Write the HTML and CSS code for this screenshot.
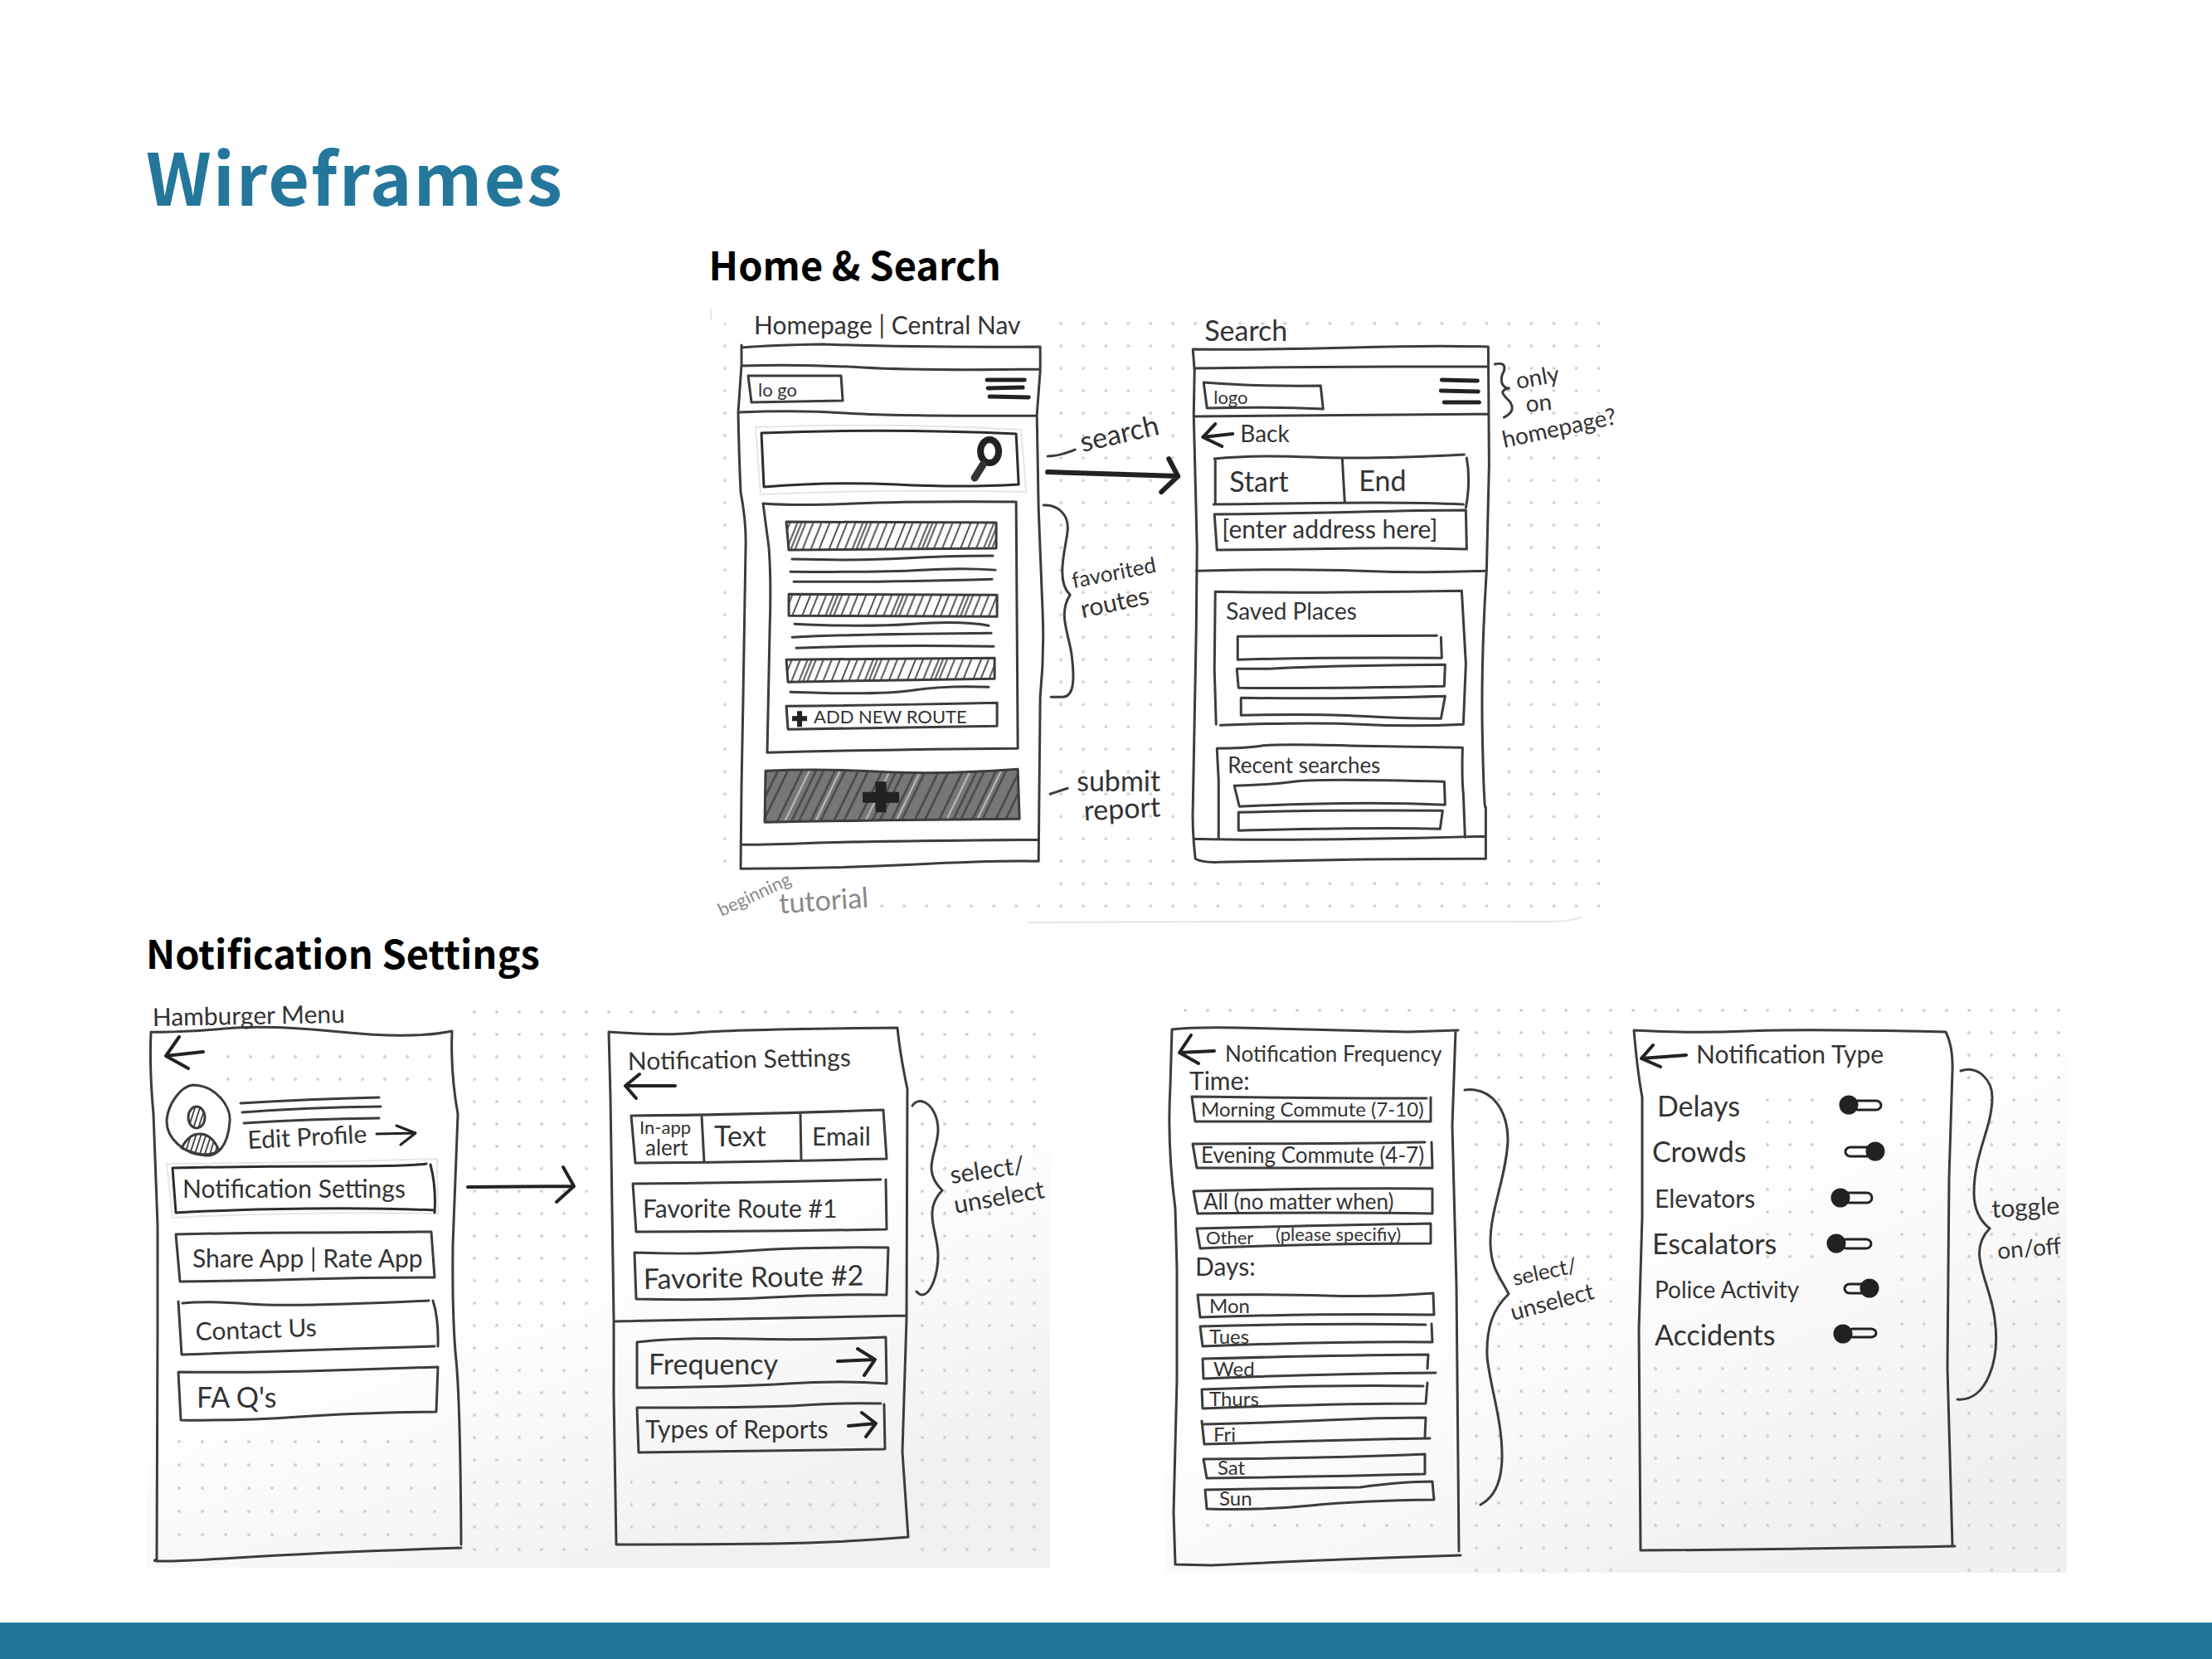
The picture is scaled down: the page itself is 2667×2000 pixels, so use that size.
FILE: index.html
```html
<!DOCTYPE html>
<html lang="en">
<head>
<meta charset="utf-8">
<meta name="viewport" content="width=device-width, initial-scale=1">
<title>Wireframes</title>
<link rel="stylesheet" href="styles.css">
</head>
<body>
<main class="slide">
  <h1 class="slide-title">Wireframes</h1>

  <section class="flow flow-home">
    <h2 class="flow-title">Home &amp; Search</h2>
    <svg class="sketch" viewBox="855 364 1095 750" role="img" aria-label="Sketch of the homepage and the search screen">
      <defs>
        <pattern id="dots-a" width="27" height="27" x="1265" y="403" patternUnits="userSpaceOnUse"><circle class="dot" cx="14" cy="14" r="2"/></pattern>
        <pattern id="hatch" width="79" height="60" patternUnits="userSpaceOnUse" patternTransform="skewX(-22)">
          <path class="hatch-line" d="M3 0V60M12 0V60M22 0V60M31 0V60M36 0V60M41 0V60M50 0V60M60 0V60M70 0V60"/>
        </pattern>
        <pattern id="scribble" width="97" height="80" patternUnits="userSpaceOnUse" patternTransform="skewX(-26)">
          <rect width="97" height="80" fill="#777"/>
          <path d="M5 0V80M17 0V80M33 0V80M45 0V80M62 0V80M79 0V80M88 0V80" stroke="#4a4a4a" stroke-width="3"/>
          <path d="M11 0V80M71 0V80" stroke="#c4c4c4" stroke-width="2"/>
        </pattern>
      </defs>
      <path class="paper-dots" fill="url(#dots-a)" d="M1265 383H1430V1100H1265ZM1430 1049H1935V1100H1430ZM1430 383H1935V410H1430ZM1803 410H1935V1100H1803ZM1060 1070H1265V1100H1060ZM858 390H880V1040H858Z"/>
      <path class="faint" d="M857 373V385M1240 1112Q1500 1110 1860 1111Q1890 1111 1905 1106"/>

      <!-- Homepage -->
      <path class="pen" d="M894 416L894 440L890 497Q891 550 893 593Q900 630 899 660L896 840L894 947L893 1047Q1000 1047 1100 1042T1252 1038L1254 840Q1259 790 1257 740L1252 613L1250 500L1254 447V418Q1100 419 992 415Q930 416 894 419M894 441Q970 439 1040 443T1254 445M891 497Q960 494 1020 498T1250 501M896 1018Q930 1018 980 1016T1252 1012"/>
      <path class="pen" d="M902 453L1014 453L1016 483L906 485Z"/>
      <path class="bars" d="M1190 458H1235M1191 468L1233 467M1193 478L1240 479"/>
      <path class="faint" d="M911 515Q1070 509 1231 518L1237 593Q1080 589 917 596Z"/>
      <path class="pen strong" d="M918 522Q1070 516 1225 523L1228 584Q1160 588 1080 584T921 587Z"/>
      <ellipse class="lens" cx="1193" cy="544" rx="11" ry="14"/>
      <path class="handle" d="M1185 560L1175 576"/>
      <path class="pen" d="M920 607Q960 610 1030 607T1225 605L1227 902Q1080 903 925 907L928 760Q930 700 927 660Z"/>
      <path class="pen hatched" d="M948 629L1201 630V661L951 663Z"/>
      <path class="pen" d="M955 674Q1040 676 1090 673T1197 670M953 689Q1060 690 1110 687T1200 687M957 701Q1060 702 1196 698"/>
      <path class="pen hatched" d="M951 716L1202 717V743L951 742Z"/>
      <path class="pen" d="M958 752Q1040 756 1100 752T1192 754M955 768Q1040 764 1195 763M960 781Q1060 777 1198 779"/>
      <path class="pen hatched" d="M948 795L1199 793V818L950 822Z"/>
      <path class="pen" d="M953 834Q1060 838 1100 832T1192 828"/>
      <path class="pen" d="M948 851Q1060 850 1202 847V875Q1090 877 950 879Z"/>
      <path class="cross" d="M964 857V876M955 866H973"/>
      <path class="pen report" d="M923 929Q990 926 1060 930T1227 927L1229 987Q1080 988 922 991Z"/>
      <path class="cross big" d="M1062 942V979M1040 961H1084"/>
      <path class="pen" d="M1263 550Q1276 550 1296 542M1266 957L1287 950"/>
      <path class="arrow bold" d="M1263 569L1420 574M1409 553L1420 574L1400 593"/>
      <path class="pen" d="M1258 609C1275 608 1289 620 1287 640S1272 700 1290 717C1275 740 1289 765 1292 790S1296 840 1281 840H1267"/>
      <g class="hand">
        <text class="s30" x="909" y="403">Homepage | Central Nav</text>
        <text class="s22" x="914" y="478">lo go</text>
        <text class="s22" x="981" y="872">ADD NEW ROUTE</text>
        <text class="s34" transform="translate(1305 545) rotate(-13)">search</text>
        <text class="s26" transform="translate(1294 709) rotate(-11)">favorited</text>
        <text class="s30" transform="translate(1305 745) rotate(-12)">routes</text>
        <text class="s34" x="1298" y="954">submit</text>
        <text class="s34" transform="translate(1307 989) rotate(-3)">report</text>
        <text class="s22 pencil" transform="translate(870 1105) rotate(-25)">beginning</text>
        <text class="s34 pencil" transform="translate(940 1101) rotate(-4)">tutorial</text>
      </g>

      <!-- Search -->
      <path class="pen" d="M1438 421Q1530 422 1630 419T1794 418L1795 560L1792 687Q1785 800 1787 890T1791 973V1035Q1700 1035 1630 1036T1470 1039Q1450 1040 1441 1035Q1437 1000 1438 973L1442 760L1443 660L1439 500L1440 447ZM1440 444Q1600 442 1680 442T1794 442M1440 502Q1620 501 1794 499M1442 688Q1560 685 1640 688T1790 688M1440 1011Q1560 1014 1790 1008"/>
      <path class="pen" d="M1451 461Q1510 466 1592 465L1595 493Q1530 490 1455 492Z"/>
      <path class="bars" d="M1738 458L1781 459M1737 471L1782 472M1741 485H1783"/>
      <path class="arrow" d="M1486 523L1450 527M1465 511L1450 527L1473 538"/>
      <path class="pen" d="M1464 553Q1510 548 1580 551T1765 548M1768 552Q1773 580 1767 612M1463 608Q1600 606 1660 606T1764 608M1465 553V608M1618 552L1621 605"/>
      <path class="pen" d="M1464 620Q1560 619 1640 617T1767 615L1768 662Q1700 660 1640 661T1467 663Z"/>
      <path class="pen" d="M1465 713Q1500 714 1560 714T1762 712L1767 800L1764 873Q1700 876 1640 873T1471 874M1465 713L1464 807L1466 873"/>
      <path class="pen" d="M1732 766Q1600 767 1492 767V795Q1600 792 1738 793L1737 768M1491 806H1530Q1600 802 1742 801L1741 827Q1600 830 1493 829ZM1496 841Q1600 843 1742 839L1737 866Q1690 866 1640 863T1496 862Z"/>
      <path class="pen" d="M1469 1011L1469 940L1467 902Q1500 902 1520 899T1640 899L1763 901Q1762 940 1764 957L1766 1009"/>
      <path class="pen" d="M1488 947Q1530 946 1560 942T1741 942L1742 970Q1640 965 1494 972ZM1493 979Q1600 976 1739 977L1736 999Q1660 997 1493 1001Z"/>
      <path class="pen" d="M1802 439Q1816 436 1813 447C1806 460 1812 468 1819 468C1806 471 1812 476 1820 484Q1828 496 1813 503"/>
      <g class="hand">
        <text class="s34" x="1452" y="411">Search</text>
        <text class="s22" x="1463" y="487">logo</text>
        <text class="s28" x="1495" y="533">Back</text>
        <text class="s34" x="1482" y="593">Start</text>
        <text class="s34" x="1638" y="592">End</text>
        <text class="s30" x="1473" y="649">[enter address here]</text>
        <text class="s28" x="1478" y="747">Saved Places</text>
        <text class="s26" x="1480" y="932">Recent searches</text>
        <text class="s28" transform="translate(1829 469) rotate(-10)">only</text>
        <text class="s28" transform="translate(1840 497) rotate(-6)">on</text>
        <text class="s28" transform="translate(1813 540) rotate(-12)">homepage?</text>
      </g>
    </svg>
  </section>

  <section class="flow">
    <h2 class="flow-title">Notification Settings</h2>
    <div class="sketch-pair">
      <svg class="sketch" viewBox="176 1194 1090 702" role="img" aria-label="Sketch of the hamburger menu and the notification settings screen">
        <defs>
          <pattern id="dots-b" width="27" height="27" x="558" y="1206" patternUnits="userSpaceOnUse"><circle class="dot" cx="14" cy="14" r="2"/></pattern>
          <pattern id="dots-c" width="28" height="28" x="202" y="1724" patternUnits="userSpaceOnUse"><circle class="dot" cx="14" cy="14" r="2"/></pattern>
          <pattern id="hatch-b" width="6" height="60" patternUnits="userSpaceOnUse" patternTransform="skewX(-18)"><path class="hatch-line" d="M3 0V60"/></pattern>
          <linearGradient id="shade-b" gradientUnits="userSpaceOnUse" x1="560" y1="1560" x2="690" y2="1930">
            <stop offset="0" stop-color="#f1f1f1" stop-opacity="0"/><stop offset="1" stop-color="#f1f1f1"/>
          </linearGradient>
        </defs>
        <rect x="176" y="1206" width="1090" height="684" fill="url(#shade-b)"/>
        <path fill="url(#dots-b)" d="M558 1206H1239V1233H558ZM558 1233H730V1890H558ZM1100 1233H1266V1890H1100ZM760 1770H1080V1850H760ZM260 1260H540V1314H260Z"/>
        <path fill="url(#dots-c)" d="M202 1724H538V1864H202Z"/>

        <!-- Hamburger menu -->
        <path class="pen" d="M182 1244Q220 1245 271 1240T410 1244T545 1243Q543 1293 552 1343L546 1500Q545 1590 550 1640T556 1862M556 1866Q400 1871 285 1878T189 1880L190 1600V1477L185 1343Q180 1290 182 1244"/>
        <path class="arrow" d="M245 1268L200 1273M216 1250L200 1273L227 1288"/>
        <path class="pen" d="M232 1308C260 1308 279 1334 277 1352C275 1382 262 1394 248 1393C222 1392 200 1372 201 1350C203 1330 218 1310 232 1308Z"/>
        <ellipse class="pen hatched-b" cx="237" cy="1347" rx="10" ry="13"/>
        <path class="pen hatched-b" d="M219 1384Q228 1366 242 1367T264 1387Q250 1398 219 1384Z"/>
        <path class="pen" d="M290 1330Q370 1325 457 1323M292 1341Q370 1335 459 1334M294 1354Q370 1349 457 1348"/>
        <path class="arrow thin" d="M454 1367L501 1366M478 1357L501 1366L483 1380"/>
        <path class="faint" d="M201 1403Q370 1402 527 1397L528 1463Q370 1460 208 1468Z"/>
        <path class="pen strong" d="M208 1408Q300 1406 400 1406T514 1403M519 1404Q526 1430 524 1462M212 1462Q280 1458 370 1457T524 1459M208 1408L212 1462"/>
        <path class="pen" d="M212 1488Q300 1486 360 1486T520 1485L524 1540Q440 1540 370 1542T217 1545Z"/>
        <path class="pen" d="M220 1571Q250 1568 300 1572T517 1568M522 1568Q529 1590 528 1623M524 1623Q380 1627 219 1633L215 1569"/>
        <path class="pen" d="M215 1654Q300 1655 370 1653T528 1648L526 1702Q430 1703 360 1708T218 1712Z"/>
        <path class="arrow" d="M564 1431L692 1430M679 1407L692 1430L671 1449"/>

        <!-- Notification settings -->
        <path class="pen" d="M734 1244Q800 1249 840 1245T1082 1239Q1085 1270 1094 1313L1093 1590L1088 1750L1095 1853Q1010 1860 930 1861T770 1862L743 1862L740 1683V1590L736 1323ZM741 1593Q900 1590 1092 1586"/>
        <path class="arrow" d="M814 1309H754M771 1295L754 1309L767 1324"/>
        <path class="pen" d="M761 1345Q900 1344 1065 1338L1069 1397Q900 1401 766 1402ZM846 1345L849 1401M965 1342L966 1399"/>
        <path class="pen" d="M1062 1422Q900 1426 763 1427L767 1485Q900 1485 1069 1482L1068 1422"/>
        <path class="pen" d="M765 1510Q840 1513 900 1508T1071 1504L1069 1561Q1000 1560 930 1564T767 1566Z"/>
        <path class="pen" d="M768 1618Q820 1612 900 1614T1068 1612L1069 1668Q1010 1664 950 1668T768 1673Z"/>
        <path class="pen" d="M1062 1692Q1010 1691 970 1694T768 1697L770 1751Q900 1749 1067 1747L1066 1693"/>
        <path class="arrow" d="M1010 1641L1055 1639M1034 1626L1055 1639L1042 1658M1023 1719L1056 1716M1039 1703L1056 1716L1044 1732"/>
        <path class="pen" d="M1100 1333C1110 1318 1131 1335 1131 1362S1110 1410 1136 1435C1112 1460 1131 1485 1131 1513S1118 1572 1105 1557"/>
        <g class="hand">
          <text class="s30" transform="translate(184 1237) rotate(-1)">Hamburger Menu</text>
          <text class="s30" transform="translate(299 1385) rotate(-3)">Edit Profile</text>
          <text class="s30" x="220" y="1444">Notification Settings</text>
          <text class="s30" x="232" y="1528">Share App | Rate App</text>
          <text class="s30" transform="translate(236 1616) rotate(-2)">Contact Us</text>
          <text class="s34" x="237" y="1697">FA Q's</text>
          <text class="s30" transform="translate(757 1290) rotate(-1)">Notification Settings</text>
          <text class="s22" x="771" y="1367">In-app</text>
          <text class="s26" x="778" y="1393">alert</text>
          <text class="s34" x="861" y="1382">Text</text>
          <text class="s30" x="979" y="1381">Email</text>
          <text class="s30" x="775" y="1468">Favorite Route #1</text>
          <text class="s34" transform="translate(776 1554) rotate(-1)">Favorite Route #2</text>
          <text class="s34" x="782" y="1657">Frequency</text>
          <text class="s30" x="778" y="1734">Types of Reports</text>
          <text class="s30" transform="translate(1147 1427) rotate(-8)">select/</text>
          <text class="s30" transform="translate(1152 1463) rotate(-10)">unselect</text>
        </g>
      </svg>

      <svg class="sketch" viewBox="1405 1194 1087 702" role="img" aria-label="Sketch of the notification frequency and the notification type screen">
        <defs>
          <pattern id="dots-d" width="27" height="27" x="1766" y="1204" patternUnits="userSpaceOnUse"><circle class="dot" cx="14" cy="14" r="2"/></pattern>
          <linearGradient id="shade-d" gradientUnits="userSpaceOnUse" x1="1760" y1="1540" x2="1960" y2="1980">
            <stop offset="0" stop-color="#f0f0f0" stop-opacity="0"/><stop offset="1" stop-color="#f0f0f0"/>
          </linearGradient>
        </defs>
        <rect x="1405" y="1204" width="1087" height="692" fill="url(#shade-d)"/>
        <path fill="url(#dots-d)" d="M1414 1204H2492V1231H1414ZM1766 1231H1960V1896H1766ZM2360 1231H2492V1896H2360ZM1990 1636H2340V1852H1990ZM2110 1312H2200V1528H2110ZM2280 1312H2340V1636H2280ZM1440 1825H1740V1852H1440Z"/>

        <!-- Notification frequency -->
        <path class="pen" d="M1413 1241Q1440 1238 1490 1239T1697 1244Q1730 1243 1758 1242M1755 1243L1751 1357L1756 1550L1759 1870M1761 1875Q1600 1880 1461 1887L1417 1886L1415 1823L1419 1663V1530L1417 1457Q1407 1380 1411 1310L1413 1241"/>
        <path class="arrow" d="M1464 1267L1422 1269M1436 1248L1422 1269L1445 1282"/>
        <path class="pen" d="M1720 1324Q1600 1324 1437 1322L1441 1352H1725V1323M1718 1377Q1600 1379 1438 1379L1443 1408H1727L1726 1377M1439 1436Q1600 1432 1727 1433V1463Q1600 1461 1444 1463ZM1443 1481Q1600 1477 1725 1475V1499Q1580 1499 1447 1505Z"/>
        <path class="pen" d="M1444 1561Q1540 1560 1600 1562T1728 1559L1729 1585Q1600 1583 1447 1588ZM1719 1597Q1600 1595 1447 1599L1450 1623Q1600 1617 1727 1618L1726 1596M1721 1650L1722 1633Q1600 1634 1450 1638L1451 1662Q1600 1656 1731 1655M1716 1671Q1600 1669 1449 1675L1450 1698Q1600 1692 1719 1692L1721 1667M1449 1713L1452 1741Q1600 1736 1724 1734M1452 1717Q1540 1715 1600 1712T1719 1709L1718 1732M1451 1759Q1600 1758 1718 1753V1777Q1600 1780 1455 1782ZM1453 1796Q1560 1794 1640 1793Q1690 1786 1727 1786L1729 1808Q1640 1809 1580 1815T1455 1819Z"/>
        <path class="pen" d="M1766 1314C1800 1310 1818 1340 1818 1375C1816 1420 1796 1460 1797 1500C1798 1530 1808 1538 1819 1560C1800 1578 1792 1600 1793 1635C1796 1670 1811 1710 1811 1755C1811 1790 1800 1806 1785 1814"/>

        <!-- Notification type -->
        <path class="pen" d="M1970 1242Q2040 1246 2106 1243T2346 1244Q2355 1262 2354 1291L2350 1420L2348 1649L2354 1863M2357 1864Q2160 1868 1978 1869L1976 1603L1980 1466V1323Q1974 1290 1970 1242"/>
        <path class="arrow" d="M2033 1272L1979 1276M1993 1260L1979 1276L2002 1286"/>
        <g class="toggle">
          <rect x="2234" y="1327" width="34" height="11" rx="6"/><circle cx="2229" cy="1332" r="10"/>
          <rect x="2225" y="1383" width="34" height="11" rx="6"/><circle cx="2261" cy="1388" r="10"/>
          <rect x="2223" y="1438" width="34" height="12" rx="6"/><circle cx="2219" cy="1444" r="10"/>
          <rect x="2220" y="1494" width="36" height="11" rx="6"/><circle cx="2214" cy="1499" r="10"/>
          <rect x="2224" y="1548" width="28" height="11" rx="6"/><circle cx="2254" cy="1553" r="10"/>
          <rect x="2228" y="1602" width="34" height="10" rx="6"/><circle cx="2222" cy="1608" r="10"/>
        </g>
        <path class="pen" d="M2364 1291C2385 1284 2402 1302 2402 1323C2402 1360 2380 1390 2380 1438Q2380 1466 2399 1481C2370 1510 2400 1545 2405 1590C2412 1640 2395 1690 2360 1687"/>
        <g class="hand">
          <text class="s26" x="1477" y="1280">Notification Frequency</text>
          <text class="s30" x="1434" y="1314">Time:</text>
          <text class="s24" x="1448" y="1346">Morning Commute (7-10)</text>
          <text class="s26" x="1448" y="1402">Evening Commute (4-7)</text>
          <text class="s26" x="1451" y="1458">All (no matter when)</text>
          <text class="s22" x="1454" y="1500">Other</text>
          <text class="s22" x="1538" y="1496">(please specifiy)</text>
          <text class="s30" x="1441" y="1538">Days:</text>
          <text class="s24" x="1458" y="1583">Mon</text>
          <text class="s24" x="1458" y="1620">Tues</text>
          <text class="s24" x="1463" y="1659">Wed</text>
          <text class="s24" x="1458" y="1695">Thurs</text>
          <text class="s24" x="1463" y="1738">Fri</text>
          <text class="s24" x="1468" y="1778">Sat</text>
          <text class="s24" x="1470" y="1815">Sun</text>
          <text class="s26" transform="translate(1826 1550) rotate(-12)">select/</text>
          <text class="s28" transform="translate(1824 1592) rotate(-15)">unselect</text>
          <text class="s30" x="2045" y="1282">Notification Type</text>
          <text class="s34" x="1998" y="1346">Delays</text>
          <text class="s34" x="1992" y="1401">Crowds</text>
          <text class="s30" x="1995" y="1456">Elevators</text>
          <text class="s34" x="1992" y="1512">Escalators</text>
          <text class="s28" x="1995" y="1565">Police Activity</text>
          <text class="s34" x="1995" y="1622">Accidents</text>
          <text class="s30" transform="translate(2402 1468) rotate(-3)">toggle</text>
          <text class="s28" transform="translate(2409 1518) rotate(-5)">on/off</text>
        </g>
      </svg>
    </div>
  </section>
</main>
<footer class="slide-footer"></footer>
</body>
</html>
```

FILE: styles.css
```css
* {
  box-sizing: border-box;
}

body {
  margin: 0;
  min-height: 100vh;
  display: flex;
  flex-direction: column;
  background: #fff;
  color: #000;
  font-family: "Noto Sans CJK SC", "Noto Sans", sans-serif;
}

.slide {
  flex: 1;
  padding: 147px 175px 60px 176px;
}

.slide-title {
  margin: 0 0 11px;
  color: #24779b;
  font-size: 86px;
  font-weight: 700;
  line-height: 128px;
  letter-spacing: 2px;
}

.flow-title {
  margin: 0 0 14px;
  font-size: 47px;
  font-weight: 700;
  line-height: 64px;
}

.flow-home {
  width: 47.3%;
  margin: 0 0 2px 29.3%;
}

.sketch {
  display: block;
  width: 100%;
  height: auto;
}

.sketch-pair {
  display: grid;
  grid-template-columns: 1090fr 1087fr;
  gap: 139px;
}

.slide-footer {
  height: 44px;
  background: #24779b;
}

/* Pen strokes */
.pen,
.arrow,
.faint,
.bars,
.cross,
.lens,
.handle {
  fill: none;
  stroke: #3c3c3c;
  stroke-width: 3;
  stroke-linecap: round;
  stroke-linejoin: round;
}

.strong {
  stroke: #2c2c2c;
}

.faint {
  stroke: #e6e6e6;
  stroke-width: 2;
}

.arrow {
  stroke: #222;
  stroke-width: 4;
}

.arrow.thin {
  stroke-width: 3;
}

.arrow.bold {
  stroke-width: 6;
}

.bars {
  stroke: #222;
  stroke-width: 5;
}

.lens {
  stroke: #222;
  stroke-width: 8;
}

.handle {
  stroke: #333;
  stroke-width: 9;
}

.cross {
  stroke: #222;
  stroke-width: 6;
  stroke-linecap: butt;
}

.cross.big {
  stroke-width: 13;
}

.hatched {
  fill: url(#hatch);
}

.hatched-b {
  fill: url(#hatch-b);
}

.hatch-line {
  fill: none;
  stroke: #484848;
  stroke-width: 2;
}

.report {
  fill: url(#scribble);
}

.dot {
  fill: #d2d2d2;
}

.toggle {
  fill: none;
  stroke: #222;
  stroke-width: 3;
}

.toggle circle {
  fill: #222;
}

/* Handwritten labels */
.hand {
  fill: #333;
  font-family: Lato, "Open Sans", sans-serif;
}

.pencil {
  fill: #8a8a8a;
}

.s22 {
  font-size: 22px;
}

.s24 {
  font-size: 24px;
}

.s26 {
  font-size: 26px;
}

.s28 {
  font-size: 28px;
}

.s30 {
  font-size: 30px;
}

.s34 {
  font-size: 34px;
}
```
